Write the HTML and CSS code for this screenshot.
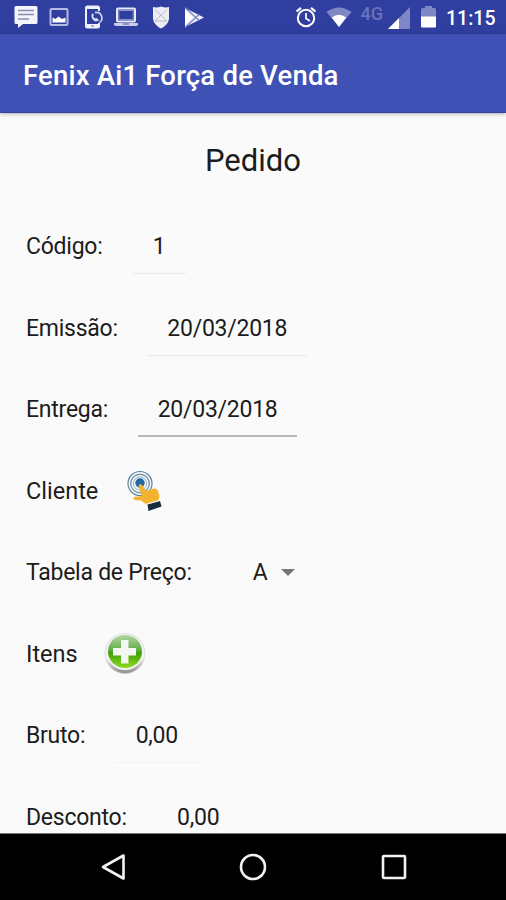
FILE: index.html
```html
<!DOCTYPE html>
<html lang="pt-BR">

<head>
  <meta charset="UTF-8">
  <meta name="viewport" content="width=device-width, initial-scale=1.0">
  <title>Fenix Ai1 Força de Venda</title>
  <link rel="stylesheet" href="styles.css">
</head>

<body>
  <div class="screen">
    <div class="status-bar">
      <div class="notifications">
        <!-- message -->
        <svg width="24" height="24" viewBox="0 0 24 24">
          <path d="M2 1h20q1.500 0 1.500 1.500v15q0 1.500-1.500 1.500H9l-5 4v-4H2q-1.500 0-1.500-1.500v-15Q.5 1 2 1z" fill="#f4f5fb" />
          <path d="M4 5.500h16M4 9.500h16M4 14h11" stroke="#8a8eb4" stroke-width="1.600" />
        </svg>
        <!-- picture -->
        <svg class="icon-picture" width="20" height="20" viewBox="0 0 20 20">
          <rect x="1.500" y="2" width="17" height="16" rx="1" fill="none" stroke="#b5bae0" stroke-width="2" />
          <path d="M3.500 15.500v-5l3 1.500 3-2.500 3.500 2.500 3.500-1.500v5z" fill="#fff" />
        </svg>
        <!-- phone -->
        <svg class="icon-phone" width="20" height="24" viewBox="0 0 20 24">
          <path d="M16 6V3q0-1.500-1.500-1.500h-10Q3 1.500 3 3v18q0 1.500 1.500 1.500h10Q16 22.500 16 21v-3" fill="none" stroke="#eef0fa" stroke-width="2" />
          <path d="M3 2.500h13M3 20.500h13" stroke="#eef0fa" stroke-width="3" />
          <path d="M9 8q-2 6 3.500 8.500l3.500-1-2-2.500-2 .5-2-2 1-1.500z" fill="#dfe2f6" />
          <path d="M12 7.500q5-1 6.500 3.500t-2 6.500" fill="none" stroke="#ccd0ec" stroke-width="1.800" />
          <path d="M8.500 21h2" stroke="#303f9f" />
        </svg>
        <!-- laptop -->
        <svg class="icon-laptop" width="26" height="20" viewBox="0 0 26 20">
          <rect x="4" y="1.500" width="18" height="13" rx="1" fill="none" stroke="#e9ebf8" stroke-width="2" />
          <rect x="5.800" y="3.500" width="14.400" height="9" fill="none" stroke="#8c94cc" />
          <path d="M1 16h24v2q-1 1-2 1H3q-1 0-2-1z" fill="#c9cde8" />
          <path d="M10 17h6" stroke="#555da3" />
        </svg>
        <!-- shield -->
        <svg class="icon-shield" width="18" height="23" viewBox="0 0 18 23">
          <path d="M1 1q4 1 8-.5Q13 2 17 1v12q-1 6-8 9.500Q2 19 1 13z" fill="#eceef4" />
          <path d="M3 3.500l12 11.500M15 3.500L3 15M3 15h12" stroke="#b9bbc8" stroke-width="1" />
        </svg>
        <!-- play store -->
        <svg class="icon-play" width="21" height="21" viewBox="0 0 21 21">
          <path d="M1 1l19 9.500-19 9.500z" fill="#eef0fa" />
          <path d="M1 .5l14 13M1 20.500l14-13" stroke="#7680c4" stroke-width="1.200" />
          <path d="M1 3v15l7.500-7.500z" fill="#fff" />
        </svg>
      </div>
      <div class="system">
        <!-- alarm -->
        <svg width="22" height="22" viewBox="0 0 22 22">
          <circle cx="11" cy="12" r="8.200" fill="none" stroke="#fff" stroke-width="2" />
          <path d="M1.500 5.500L6 1.800M20.500 5.500L16 1.800" stroke="#fff" stroke-width="2.200" />
          <path d="M11 7v5.500l4 2.500" fill="none" stroke="#fff" stroke-width="1.700" />
        </svg>
        <!-- wifi -->
        <svg class="icon-wifi" width="26" height="20" viewBox="0 0 26 20">
          <path d="M.5 5Q13-4 25.500 5L13 20z" fill="#7f88c5" />
          <path d="M5.800 10.500Q13 5 20.200 10.500L13 20z" fill="#fff" />
        </svg>
        <span class="network">4G</span>
        <!-- signal -->
        <svg class="icon-signal" width="22" height="22" viewBox="0 0 22 22">
          <path d="M22 0v22H0z" fill="#7f88c5" />
          <path d="M11 11v11H0z" fill="#fff" />
        </svg>
        <!-- battery -->
        <svg class="icon-battery" width="15" height="22" viewBox="0 0 15 22">
          <path d="M4 0h7v2h2.500Q15 2 15 3.500V11H0V3.500Q0 2 1.500 2H4z" fill="#7f88c5" />
          <path d="M0 10.500h15v10q0 1-1 1H1q-1 0-1-1z" fill="#fff" />
        </svg>
        <span class="clock">11:15</span>
      </div>
    </div>

    <div class="app-bar">Fenix Ai1 Força de Venda</div>

    <div class="content">
      <h1>Pedido</h1>
      <div class="row">
        <span class="label">Código:</span>
        <span class="field field-code">1</span>
      </div>
      <div class="row">
        <span class="label">Emissão:</span>
        <span class="field field-date">20/03/2018</span>
      </div>
      <div class="row">
        <span class="label">Entrega:</span>
        <span class="field field-date active">20/03/2018</span>
      </div>
      <div class="row">
        <span class="label label-big">Cliente</span>
        <svg class="icon-touch" width="36" height="42" viewBox="0 0 36 42">
          <g fill="none">
            <circle cx="13" cy="13.500" r="12" stroke="#59829f" stroke-width="1.200" />
            <circle cx="13" cy="13.500" r="9.300" stroke="#7899b0" stroke-width="1.400" />
            <circle cx="13" cy="13.500" r="6.600" stroke="#a9c1d4" stroke-width="1.200" />
          </g>
          <circle cx="13" cy="13" r="4.700" fill="#2367a0" />
          <path d="M11.500 15.500q1.500-3 4 0l3.500 5.500 8-2.500q3-.5 4 2.500l1.500 5-1 4.500-12 4-5.500-4-6-.5q-2.500-1-1-3l7.500-1z" fill="#f2b430" />
          <path d="M20.500 34.500l12.500-3.500 1.500 5.500-13 4.500z" fill="#172b3e" />
          <path d="M19.500 34l12.500-3.500" stroke="#f5f5ee" stroke-width="1" />
        </svg>
      </div>
      <div class="row">
        <span class="label">Tabela de Preço:</span>
        <span class="select">A<i class="arrow"></i></span>
      </div>
      <div class="row">
        <span class="label label-big">Itens</span>
        <svg class="icon-add" width="42" height="42" viewBox="0 0 42 42">
          <defs>
            <linearGradient id="ring" x1="0" y1="0" x2="0" y2="1">
              <stop offset="0" stop-color="#e5e7e5" />
              <stop offset=".6" stop-color="#f4f4f4" />
              <stop offset="1" stop-color="#8a8a8a" />
            </linearGradient>
            <linearGradient id="green" x1="0" y1="0" x2="0" y2="1">
              <stop offset="0" stop-color="#b4d6a4" />
              <stop offset=".45" stop-color="#62ae46" />
              <stop offset=".55" stop-color="#40a008" />
              <stop offset="1" stop-color="#8ddb20" />
            </linearGradient>
          </defs>
          <circle cx="21" cy="20.500" r="20" fill="url(#ring)" stroke="#d0d2d0" stroke-width=".6" />
          <ellipse cx="21" cy="19" rx="18.500" ry="18" fill="#f1f3f1" />
          <ellipse cx="21" cy="18.500" rx="17" ry="16.500" fill="url(#green)" />
          <path d="M17 7h7.500v8H32v7.500h-7.500v8H17v-8H9V15h8z" fill="#f4f8f2" />
        </svg>
      </div>
      <div class="row">
        <span class="label">Bruto:</span>
        <span class="field field-value faint">0,00</span>
      </div>
      <div class="row">
        <span class="label">Desconto:</span>
        <span class="field field-value">0,00</span>
      </div>
    </div>

    <div class="nav-bar">
      <svg width="28" height="28" viewBox="0 0 28 28">
        <path d="M24.500 2.500v23L4 14z" />
      </svg>
      <svg width="28" height="28" viewBox="0 0 28 28">
        <circle cx="14" cy="14" r="12" />
      </svg>
      <svg width="28" height="28" viewBox="0 0 28 28">
        <rect x="3" y="3" width="22" height="22" rx="1" />
      </svg>
    </div>
  </div>
</body>

</html>
```
FILE: styles.css
```css
* {
  box-sizing: border-box;
}

body {
  margin: 0;
  font-family: Roboto, sans-serif;
  color: #1c1c1c;
  background: #fafafa;
}

svg {
  display: block;
  flex: none;
}

.screen {
  display: flex;
  flex-direction: column;
  width: 506px;
  height: 900px;
  overflow: hidden;
}

.status-bar {
  display: flex;
  flex: none;
  justify-content: space-between;
  height: 34px;
  padding: 0 11px 0 14px;
  background: #303f9f;
}

.notifications,
.system {
  display: flex;
  align-items: center;
}

.icon-picture {
  margin-left: 11px;
}

.icon-phone {
  margin-left: 14px;
}

.icon-laptop {
  margin-left: 10px;
}

.icon-shield {
  margin-left: 13px;
}

.icon-play {
  margin-left: 14px;
}

.icon-wifi {
  margin-left: 9px;
}

.network {
  margin: 0 5px 8px 9px;
  font-size: 18px;
  font-weight: 500;
  color: #6973b9;
}

.icon-signal {
  margin-top: 1px;
}

.icon-battery {
  margin-left: 11px;
}

.clock {
  margin: 2px 0 0 10px;
  width: 49px;
  font-size: 19.5px;
  font-weight: 500;
  color: #fff;
}

.app-bar {
  position: relative;
  flex: none;
  height: 79px;
  padding-left: 23px;
  font-size: 27.5px;
  font-weight: 500;
  letter-spacing: 0.2px;
  line-height: 83px;
  color: #fff;
  background: #3f51b5;
  border-bottom: 1px solid #34449c;
  box-shadow: 0 1px 4px rgba(0, 0, 0, 0.3);
}

.content {
  flex: 1;
  min-height: 0;
  padding: 0 26px;
  overflow: hidden;
}

h1 {
  margin: 0;
  height: 93px;
  font-size: 31px;
  font-weight: 400;
  line-height: 95px;
  text-align: center;
}

.row {
  display: flex;
  align-items: center;
  height: 81.5px;
  font-size: 23px;
  letter-spacing: -0.25px;
}

.label-big {
  font-size: 23.5px;
  letter-spacing: 0;
}

.field {
  height: 55px;
  margin-left: 30px;
  line-height: 55px;
  text-align: center;
  border-bottom: 1px solid #e9e9e9;
}

.field-code {
  width: 53px;
}

.field-date {
  width: 159px;
}

.field-value {
  width: 87px;
  margin-left: 28px;
}

.active {
  border-bottom: 2px solid #b9b9b9;
}

.faint {
  border-bottom-color: #f2f2f2;
}

.icon-touch {
  margin-left: 29px;
}

.select {
  display: flex;
  align-items: center;
  margin-left: 61px;
}

.arrow {
  margin-left: 13px;
  border: 7px solid transparent;
  border-top-color: #757575;
  border-bottom: 0;
}

.icon-add {
  margin-left: 26px;
}

.nav-bar {
  display: flex;
  flex: none;
  align-items: center;
  justify-content: center;
  gap: 112.5px;
  height: 67px;
  background: #000;
  border-top: 1px solid #777;
}

.nav-bar svg {
  fill: none;
  stroke: #f2f2f2;
  stroke-width: 2.6;
  stroke-linejoin: round;
}
```
